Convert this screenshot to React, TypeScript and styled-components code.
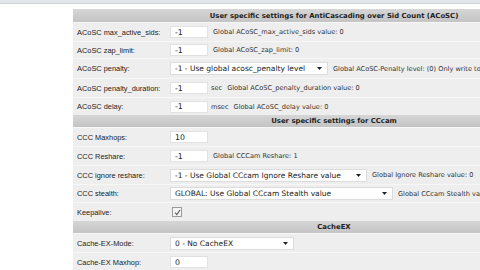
import React from 'react';
import styled, { createGlobalStyle } from 'styled-components';

const GlobalStyle = createGlobalStyle`
  html, body {
    margin: 0;
    padding: 0;
    width: 480px;
    height: 270px;
    overflow: hidden;
    background: #ffffff;
  }
`;

type Field =
  | { kind: 'input'; value: string; unit?: string; hint?: string }
  | { kind: 'select'; value: string; width: number; hint?: string }
  | { kind: 'check' };

type Item = { label: string; h: number; field: Field };

type Section = { title: string; h: number; rows: Item[] };

const sections: Section[] = [
  {
    title: 'User specific settings for AntiCascading over Sid Count (ACoSC)',
    h: 13,
    rows: [
      { label: 'ACoSC max_active_sids:', h: 19, field: { kind: 'input', value: '-1', hint: 'Global ACoSC_max_active_sids value: 0' } },
      { label: 'ACoSC zap_limit:', h: 17, field: { kind: 'input', value: '-1', hint: 'Global ACoSC_zap_limit: 0' } },
      {
        label: 'ACoSC penalty:',
        h: 20,
        field: { kind: 'select', value: '-1 - Use global acosc_penalty level', width: 158, hint: 'Global ACoSC-Penalty level: (0) Only write to log' },
      },
      { label: 'ACoSC penalty_duration:', h: 19, field: { kind: 'input', value: '-1', unit: 'sec', hint: 'Global ACoSC_penalty_duration value: 0' } },
      { label: 'ACoSC delay:', h: 18, field: { kind: 'input', value: '-1', unit: 'msec', hint: 'Global ACoSC_delay value: 0' } },
    ],
  },
  {
    title: 'User specific settings for CCcam',
    h: 12,
    rows: [
      { label: 'CCC Maxhops:', h: 19, field: { kind: 'input', value: '10' } },
      { label: 'CCC Reshare:', h: 19, field: { kind: 'input', value: '-1', hint: 'Global CCCam Reshare: 1' } },
      {
        label: 'CCC ignore reshare:',
        h: 19,
        field: { kind: 'select', value: '-1 - Use Global CCcam Ignore Reshare value', width: 197, hint: 'Global Ignore Reshare value: 0' },
      },
      {
        label: 'CCC stealth:',
        h: 18,
        field: { kind: 'select', value: 'GLOBAL: Use Global CCcam Stealth value', width: 223, hint: 'Global CCcam Stealth value: 0' },
      },
      { label: 'Keepalive:', h: 19, field: { kind: 'check' } },
    ],
  },
  {
    title: 'CacheEX',
    h: 12,
    rows: [
      { label: 'Cache-EX-Mode:', h: 19, field: { kind: 'select', value: '0 - No CacheEX', width: 124 } },
      { label: 'Cache-EX Maxhop:', h: 19, field: { kind: 'input', value: '0' } },
    ],
  },
];

const App = () => {
  return (
    <Page>
      <GlobalStyle />
      <TopBar />
      <Body>
        <Table>
          {sections.map((section) => (
            <React.Fragment key={section.title}>
              <Header $h={section.h}>{section.title}</Header>
              {section.rows.map((row) => (
                <Row key={row.label} $h={row.h}>
                  <Label>{row.label}</Label>
                  <Value>
                    <FieldView field={row.field} />
                  </Value>
                </Row>
              ))}
            </React.Fragment>
          ))}
        </Table>
      </Body>
    </Page>
  );
};

const FieldView = ({ field }: { field: Field }) => {
  if (field.kind === 'check') {
    return (
      <Check>
        <svg width="7" height="7" viewBox="0 0 7 7">
          <path d="M1 3.5 L2.8 5.5 L6 1" fill="none" stroke="#555" strokeWidth="1.1" />
        </svg>
      </Check>
    );
  }
  if (field.kind === 'select') {
    return (
      <>
        <Select $w={field.width}>
          <span>{field.value}</span>
          <svg width="5" height="3" viewBox="0 0 5 3">
            <path d="M0 0 L5 0 L2.5 3 Z" fill="#222" />
          </svg>
        </Select>
        {field.hint && <Hint>{field.hint}</Hint>}
      </>
    );
  }
  return (
    <>
      <TextInput readOnly value={field.value} />
      {field.unit && <Unit>{field.unit}</Unit>}
      {field.hint && <Hint>{field.hint}</Hint>}
    </>
  );
};

export default App;

const Page = styled.div`
  width: 480px;
  height: 270px;
  overflow: hidden;
`;

const TopBar = styled.div`
  height: 3px;
  background: #e2e6ea;
  border-bottom: 1px solid #cdd2d8;
`;

const Body = styled.div`
  padding: 5px 0 0 73px;
`;

const Table = styled.div`
  width: 522px;
  display: flex;
  flex-direction: column;
`;

const Header = styled.div<{ $h: number }>`
  height: ${(p) => p.$h}px;
  display: flex;
  align-items: center;
  justify-content: center;
  background: linear-gradient(#d6d6d6, #c4c4c4);
  font-family: 'DejaVu Sans', Verdana, sans-serif;
  font-size: 6.9px;
  font-weight: 700;
  color: #1e1e1e;
  white-space: nowrap;
`;

const Row = styled.div<{ $h: number }>`
  height: ${(p) => p.$h}px;
  box-sizing: border-box;
  display: grid;
  grid-template-columns: 94px 1fr;
  align-items: center;
  background: #eeeeee;
  border-top: 1px solid #f7f7f7;
`;

const Label = styled.div`
  padding-left: 4px;
  font-family: 'Liberation Sans', Arial, sans-serif;
  font-size: 7.4px;
  color: #222;
  white-space: nowrap;
`;

const Value = styled.div`
  display: flex;
  align-items: center;
  padding-left: 3px;
  white-space: nowrap;
`;

const TextInput = styled.input`
  width: 38px;
  height: 12px;
  box-sizing: border-box;
  margin: 0;
  padding: 0 0 0 4px;
  border: 1px solid #e2e2e2;
  background: #ffffff;
  font-family: 'DejaVu Sans', Verdana, sans-serif;
  font-size: 7.8px;
  color: #222;
  outline: none;
`;

const Select = styled.div<{ $w: number }>`
  width: ${(p) => p.$w}px;
  height: 13px;
  box-sizing: border-box;
  display: flex;
  align-items: center;
  justify-content: space-between;
  padding: 0 5px 0 4px;
  background: #ffffff;
  border: 1px solid #dcdcdc;
  font-family: 'DejaVu Sans', Verdana, sans-serif;
  font-size: 7.5px;
  color: #222;
`;

const Unit = styled.span`
  margin-left: 3px;
  font-family: 'DejaVu Sans', Verdana, sans-serif;
  font-size: 6.6px;
  color: #333;
`;

const Hint = styled.span`
  margin-left: 5px;
  font-family: 'DejaVu Sans', Verdana, sans-serif;
  font-size: 6.6px;
  color: #333;
`;

const Check = styled.span`
  width: 8px;
  height: 8px;
  margin-left: 2px;
  display: flex;
  align-items: center;
  justify-content: center;
  border: 1px solid #9a9a9a;
  background: #f4f4f4;
`;
